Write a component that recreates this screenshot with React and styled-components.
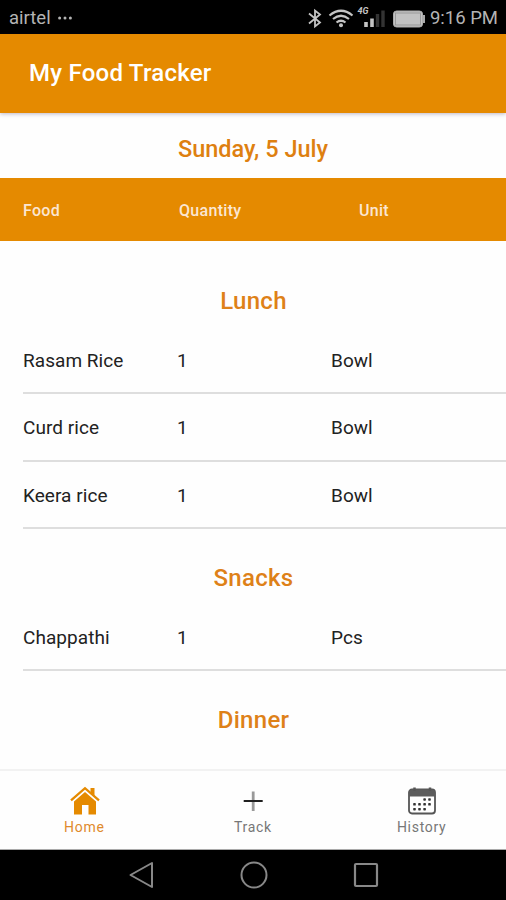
import React from "react";
import styled, { createGlobalStyle } from "styled-components";

const GlobalStyle = createGlobalStyle`
  * {
    box-sizing: border-box;
  }
  body {
    margin: 0;
    background: #fff;
    font-family: Roboto, "Liberation Sans", sans-serif;
  }
  svg {
    display: block;
  }
`;

const Screen = styled.div`
  display: flex;
  flex-direction: column;
  width: 506px;
  height: 900px;
  overflow: hidden;
  background: #fefefe;
`;

const StatusBar = styled.div`
  display: flex;
  align-items: center;
  flex: 0 0 34px;
  padding: 1px 8px 0 9px;
  background: #000;
  color: #b4b4b4;
  font-size: 18.5px;
`;

const Carrier = styled.span`
  flex: 1;
  display: flex;
  align-items: center;
  gap: 7px;
`;

const Clock = styled.span`
  margin-left: 4px;
  padding-top: 1px;
`;

const AppBar = styled.header`
  display: flex;
  align-items: center;
  flex: 0 0 79px;
  padding: 0 29px 1px;
  background: #e58a00;
  box-shadow: 0 1px 4px rgba(40, 20, 70, 0.3);
  z-index: 1;
`;

const Title = styled.h1`
  margin: 0;
  color: #fff;
  font-size: 24px;
  font-weight: 500;
  letter-spacing: 0.25px;
`;

const DateBar = styled.div`
  display: flex;
  align-items: center;
  justify-content: center;
  flex: 0 0 65px;
  padding-top: 6px;
  color: #de8010;
  font-size: 23.5px;
  font-weight: 500;
`;

const TableHead = styled.div`
  display: grid;
  grid-template-columns: 156px 180px 1fr;
  align-items: center;
  flex: 0 0 63px;
  padding: 2px 0 0 23px;
  background: #e58a00;
  color: #fbe6d2;
  font-size: 16px;
  font-weight: 500;
  letter-spacing: 0.3px;
`;

const List = styled.main`
  flex: 1;
  padding-top: 11px;
  overflow: hidden;
`;

const MealTitle = styled.h2`
  display: flex;
  align-items: center;
  justify-content: center;
  height: 74.5px;
  margin: 0;
  padding: 24px 0 0 1px;
  color: #de8118;
  font-size: 24px;
  font-weight: 500;
  letter-spacing: 0.3px;
`;

const Row = styled.div`
  display: grid;
  grid-template-columns: 154px 154px 1fr;
  align-items: center;
  height: 67.5px;
  margin-left: 23px;
  padding-top: 2px;
  border-bottom: 2px solid #dedede;
  color: #222;
  font-size: 19px;
  letter-spacing: 0.05px;
`;

const TabBar = styled.nav`
  display: grid;
  grid-template-columns: repeat(3, 1fr);
  flex: 0 0 81px;
  border-top: 2px solid #f2f2f2;
  border-bottom: 1px solid #aaa;
`;

const Tab = styled.div`
  display: flex;
  flex-direction: column;
  align-items: center;
  padding-top: 14px;
  color: ${({ $active }) => ($active ? "#e08a2c" : "#777")};
  font-size: 14px;
  letter-spacing: 0.7px;

  svg {
    margin: 0 0 2px 1px;
  }
`;

const SystemNav = styled.div`
  display: flex;
  align-items: center;
  justify-content: space-between;
  flex: 0 0 50px;
  padding: 0 126px 0 128px;
  background: #000;
`;

const meals = [
  {
    name: "Lunch",
    items: [
      { food: "Rasam Rice", quantity: 1, unit: "Bowl" },
      { food: "Curd rice", quantity: 1, unit: "Bowl" },
      { food: "Keera rice", quantity: 1, unit: "Bowl" },
    ],
  },
  { name: "Snacks", items: [{ food: "Chappathi", quantity: 1, unit: "Pcs" }] },
  { name: "Dinner", items: [] },
];

// bluetooth, wifi, signal and battery
const StatusIcons = () => (
  <svg width="120" height="32" viewBox="306 1 120 32" fill="none" stroke="#c4c4c4">
    <path d="M309 12.5 L320 21.5 L315 25.5 V9.5 L320 13.5 L309 22.5" strokeWidth="1.8" />
    <g strokeWidth="2.2">
      <path d="M329.5 14.5 Q341 5 352.5 14.5" />
      <path d="M333 18 Q341 11.5 349 18" />
      <path d="M336.5 21.5 Q341 18 345.5 21.5" />
    </g>
    <circle cx="341" cy="24.3" r="2" fill="#c4c4c4" stroke="none" />
    <text
      x="357.5"
      y="13"
      fill="#c4c4c4"
      stroke="none"
      fontSize="9"
      fontWeight="700"
      fontStyle="italic"
    >
      4G
    </text>
    <path d="M366 26 V21 M372 26 V17.5" strokeWidth="3.6" />
    <path d="M377.5 26 V13 M383 26 V9.5" strokeWidth="3.4" stroke="#333" />
    <rect x="393.5" y="10" width="29" height="16" rx="3" fill="#c2c2c2" stroke="#aaa" />
    <rect x="395.5" y="12" width="25" height="12" stroke="#8f8f8f" strokeWidth="0.8" />
    <path d="M424 14 V22" strokeWidth="2" stroke="#aaa" />
  </svg>
);

const MoreDots = () => (
  <svg width="14" height="4" viewBox="0 0 14 4" fill="#b4b4b4">
    <circle cx="1.6" cy="2" r="1.5" />
    <circle cx="7" cy="2" r="1.5" />
    <circle cx="12.4" cy="2" r="1.5" />
  </svg>
);

const HomeIcon = () => (
  <svg width="30" height="32" viewBox="0 0 30 32">
    <path d="M4 16.5 L15 7 L26 16.5 V29.5 H18.5 V20 H12 V29.5 H4 Z" fill="#e58a00" />
    <path d="M20.5 3 H24.5 V12 L20.5 8.5 Z" fill="#e58a00" />
    <path d="M1 15.3 L15 3.2 L29 15.3" fill="none" stroke="#e58a00" strokeWidth="2.3" />
  </svg>
);

const PlusIcon = () => (
  <svg width="30" height="32" viewBox="0 0 30 32">
    <path d="M15.2 6.5 V26" stroke="#999" strokeWidth="2.8" />
    <path d="M5.7 16 H24.7" stroke="#202020" strokeWidth="2" />
  </svg>
);

const dots = [
  [17.6, 14.5], [22.5, 14.5],
  [7.5, 19.3], [12.5, 19.3], [17.6, 19.3], [22.5, 19.3],
  [7.5, 24.2], [12.5, 24.2], [17.6, 24.2],
];

const CalendarIcon = () => (
  <svg width="30" height="32" viewBox="0 0 30 32">
    <rect x="2" y="4.5" width="26" height="24" rx="3" fill="none" stroke="#555" strokeWidth="1.8" />
    <path d="M2 11.5 V7.5 Q2 4.5 5 4.5 H25 Q28 4.5 28 7.5 V11.5 Z" fill="#5c5c5c" />
    <path d="M7.5 2.5 V6 M23 2.5 V6" stroke="#555" strokeWidth="2.5" />
    {dots.map(([x, y]) => (
      <rect key={`${x}-${y}`} x={x - 1.3} y={y - 1.3} width="2.6" height="2.6" rx="0.7" fill="#333" />
    ))}
  </svg>
);

const App = () => (
  <>
    <GlobalStyle />
    <Screen>
      <StatusBar>
        <Carrier>
          airtel
          <MoreDots />
        </Carrier>
        <StatusIcons />
        <Clock>9:16 PM</Clock>
      </StatusBar>
      <AppBar>
        <Title>My Food Tracker</Title>
      </AppBar>
      <DateBar>Sunday, 5 July</DateBar>
      <TableHead>
        <span>Food</span>
        <span>Quantity</span>
        <span>Unit</span>
      </TableHead>
      <List>
        {meals.map((meal) => (
          <section key={meal.name}>
            <MealTitle>{meal.name}</MealTitle>
            {meal.items.map((item) => (
              <Row key={item.food}>
                <span>{item.food}</span>
                <span>{item.quantity}</span>
                <span>{item.unit}</span>
              </Row>
            ))}
          </section>
        ))}
      </List>
      <TabBar>
        <Tab $active>
          <HomeIcon />
          Home
        </Tab>
        <Tab>
          <PlusIcon />
          Track
        </Tab>
        <Tab>
          <CalendarIcon />
          History
        </Tab>
      </TabBar>
      <SystemNav>
        <svg width="27" height="30" viewBox="0 0 27 30" fill="none" stroke="#888" strokeWidth="2">
          <path d="M2.5 15 L24 3 V27 Z" strokeLinejoin="round" />
        </svg>
        <svg width="30" height="30" viewBox="0 0 30 30" fill="none" stroke="#888" strokeWidth="2">
          <circle cx="15" cy="15" r="12.5" />
        </svg>
        <svg width="28" height="30" viewBox="0 0 28 30" fill="none" stroke="#888" strokeWidth="2.2">
          <rect x="3" y="4" width="22" height="22" rx="1" />
        </svg>
      </SystemNav>
    </Screen>
  </>
);

export default App;
